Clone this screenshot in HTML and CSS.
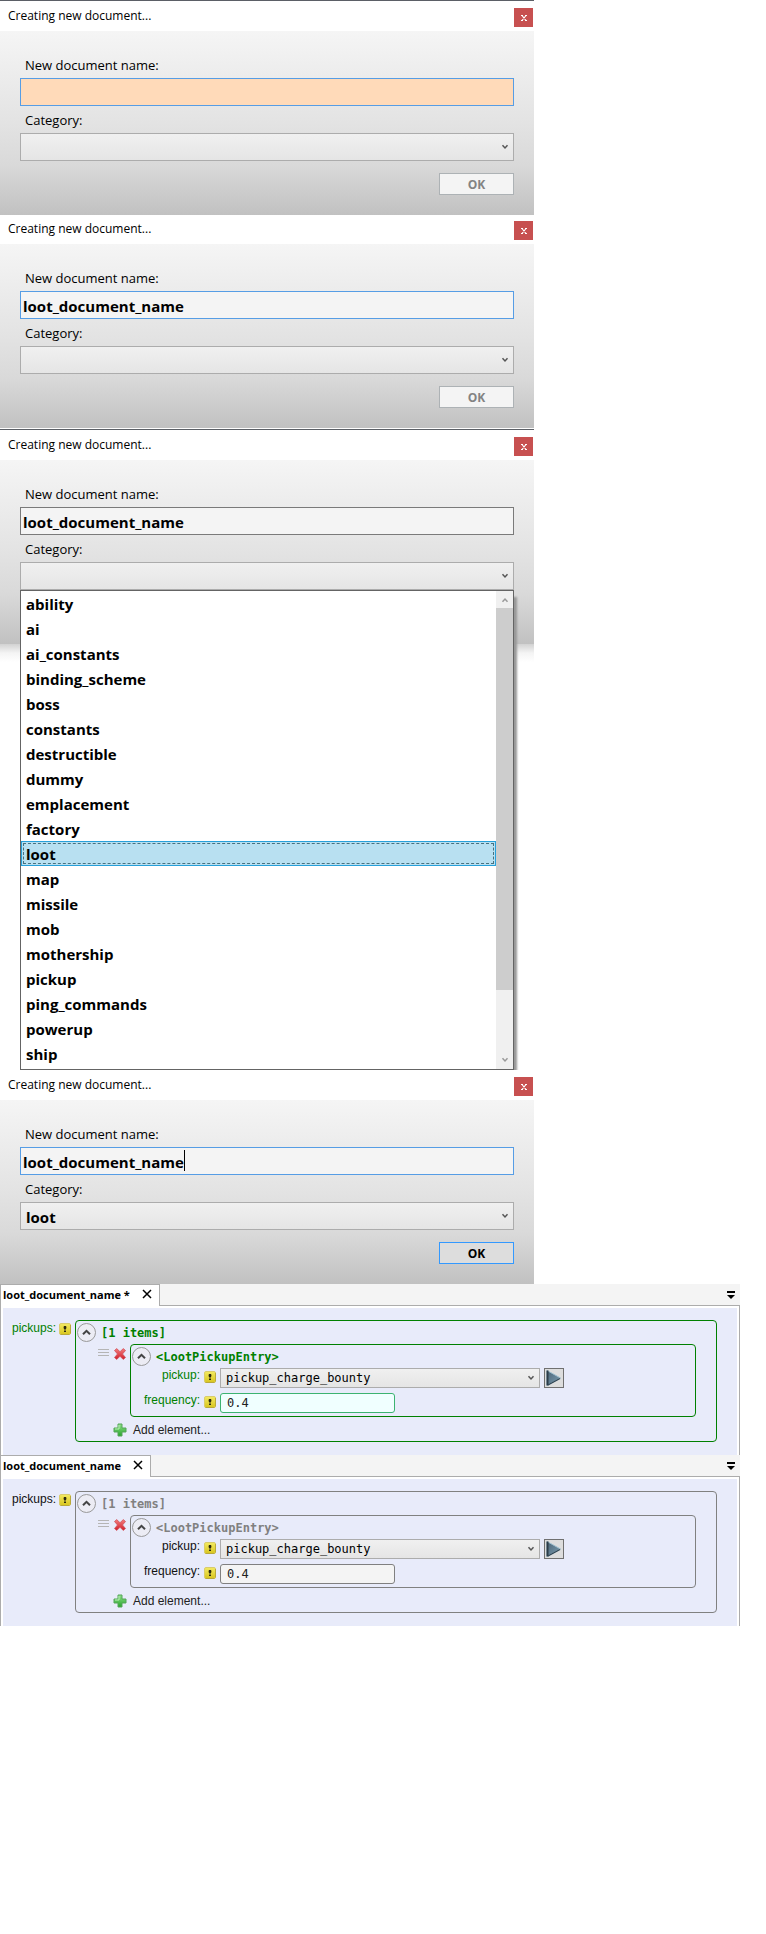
FILE: index.html
```
<!DOCTYPE html>
<html lang="en">
<head>
<meta charset="utf-8">
<title>Creating new document</title>
<link rel="stylesheet" href="styles.css">
</head>
<body>
<svg class="defs" width="0" height="0" aria-hidden="true">
  <defs>
    <linearGradient id="g-yellow" x1="0" y1="0" x2="0" y2="1"><stop offset="0" stop-color="#f3ea63"/><stop offset="1" stop-color="#d8c51e"/></linearGradient>
    <linearGradient id="g-red" x1="0" y1="0" x2="0" y2="1"><stop offset="0" stop-color="#f47d7d"/><stop offset="1" stop-color="#cf1f2b"/></linearGradient>
    <linearGradient id="g-green" x1="0" y1="0" x2="0" y2="1"><stop offset="0" stop-color="#8fe08a"/><stop offset="1" stop-color="#27a52b"/></linearGradient>
    <linearGradient id="g-play" x1="0" y1="0" x2="1" y2="1"><stop offset="0" stop-color="#4b6578"/><stop offset="1" stop-color="#7c9db0"/></linearGradient>
    <symbol id="chevron" viewBox="0 0 8 6"><path d="M1.500 1.300 L4 4 L6.500 1.300" fill="none" stroke="currentColor" stroke-width="1.5"/></symbol>
    <symbol id="note" viewBox="0 0 12 12"><rect x=".5" y=".5" width="11" height="11" rx="1.5" fill="url(#g-yellow)" stroke="#d9cc6c"/><path d="M1.500 11.500h9M11.500 2v8.500" stroke="#b9a93a" fill="none"/><path d="M5 3h2v3.500h-2zM5 7.500h2v1.500h-2z" fill="#2c2a10"/><path d="M4.300 3.500h.7v2h-.7zM7 3.500h.7v2h-.7z" fill="#8a7d1c"/></symbol>
    <symbol id="remove" viewBox="0 0 12 12"><path d="M.5 2.500 2.700.6 6 3.700 9.300.6l2.200 1.900L8.500 6l3 3.500-2.200 1.900L6 8.300l-3.300 3.100L.5 9.500 3.500 6z" fill="url(#g-red)" stroke="#d0505a" stroke-width=".8"/></symbol>
    <symbol id="plus" viewBox="0 0 14 14"><path d="M5 1h4v4h4v4H9v4H5V9H1V5h4z" fill="url(#g-green)" stroke="#55a558"/><path d="M6 2v4H2" fill="none" stroke="#b9efb5"/></symbol>
    <symbol id="drag" viewBox="0 0 12 8"><path d="M0 .5h11M0 3.500h11M0 6.500h11" stroke="#b5b5b5"/></symbol>
    <symbol id="collapse" viewBox="0 0 19 19"><circle cx="9.500" cy="9.500" r="9" fill="#ececf4" stroke="#999"/><path d="M6 11.300 9.500 7.800 13 11.300" fill="none" stroke="#444" stroke-width="2"/></symbol>
    <symbol id="play" viewBox="0 0 18 18"><path d="M2 1.500 15.500 9 2 16.500z" fill="url(#g-play)" stroke="#9fc0d0"/><path d="M2.500 1.500v15" stroke="#2c3d4a" stroke-width="2"/><path d="M3 16 15 9.500" stroke="#2f4452" stroke-width="1.300"/></symbol>
    <symbol id="tabclose" viewBox="0 0 10 10"><path d="M1 1l8 8M9 1l-8 8" stroke="#000" stroke-width="1.500"/></symbol>
    <symbol id="tablist" viewBox="0 0 8 8"><path d="M0 0h8v2H0zM0 4h8L4 8z" fill="#000"/></symbol>
    <symbol id="cross" viewBox="0 0 6 6"><path d="M0 .5h2M4 .5h2M0 5.500h2M4 5.500h2M1 .5l4 5M5 .5l-4 5" stroke="#fff" stroke-width="1.200"/></symbol>
  </defs>
</svg>

<main>
<section class="dialog dialog-edge">
  <header class="titlebar"><h2>Creating new document...</h2><button class="close" aria-label="Close"><svg width="6" height="6"><use href="#cross"/></svg></button></header>
  <form class="form">
    <label for="name1">New document name:</label>
    <input class="text active invalid" id="name1" type="text">
    <label for="cat1">Category:</label>
    <div class="select"><select id="cat1"><option></option><option>loot</option></select><svg width="8" height="6"><use href="#chevron"/></svg></div>
    <button class="ok" type="button" disabled>OK</button>
  </form>
</section>

<section class="dialog">
  <header class="titlebar titlebar-short"><h2>Creating new document...</h2><button class="close" aria-label="Close"><svg width="6" height="6"><use href="#cross"/></svg></button></header>
  <form class="form">
    <label for="name2">New document name:</label>
    <input class="text active" id="name2" type="text" value="loot_document_name">
    <label for="cat2">Category:</label>
    <div class="select"><select id="cat2"><option></option><option>loot</option></select><svg width="8" height="6"><use href="#chevron"/></svg></div>
    <button class="ok" type="button" disabled>OK</button>
  </form>
</section>

<section class="dialog dialog-edge dialog-open">
  <header class="titlebar"><h2>Creating new document...</h2><button class="close" aria-label="Close"><svg width="6" height="6"><use href="#cross"/></svg></button></header>
  <form class="form form-open">
    <label for="name3">New document name:</label>
    <input class="text" id="name3" type="text" value="loot_document_name">
    <label for="cat3">Category:</label>
    <div class="select"><select id="cat3"><option></option><option>loot</option></select><svg width="8" height="6"><use href="#chevron"/></svg></div>
    <div class="menu">
      <ul role="listbox" aria-label="Category">
        <li role="option">ability</li>
        <li role="option">ai</li>
        <li role="option">ai_constants</li>
        <li role="option">binding_scheme</li>
        <li role="option">boss</li>
        <li role="option">constants</li>
        <li role="option">destructible</li>
        <li role="option">dummy</li>
        <li role="option">emplacement</li>
        <li role="option">factory</li>
        <li role="option" class="selected" aria-selected="true">loot</li>
        <li role="option">map</li>
        <li role="option">missile</li>
        <li role="option">mob</li>
        <li role="option">mothership</li>
        <li role="option">pickup</li>
        <li role="option">ping_commands</li>
        <li role="option">powerup</li>
        <li role="option">ship</li>
      </ul>
      <div class="scrollbar">
        <svg class="up" width="8" height="6"><use href="#chevron"/></svg>
        <div class="track"><div class="thumb"></div></div>
        <svg width="8" height="6"><use href="#chevron"/></svg>
      </div>
    </div>
  </form>
</section>

<section class="dialog">
  <header class="titlebar"><h2>Creating new document...</h2><button class="close" aria-label="Close"><svg width="6" height="6"><use href="#cross"/></svg></button></header>
  <form class="form">
    <label for="name4">New document name:</label>
    <div class="caret-field"><input class="text active" id="name4" type="text" value="loot_document_name"><span class="caret"></span></div>
    <label for="cat4">Category:</label>
    <div class="select"><select id="cat4"><option>loot</option></select><svg width="8" height="6"><use href="#chevron"/></svg></div>
    <button class="ok ready" type="button">OK</button>
  </form>
</section>

<section class="editor modified">
  <header class="tabs">
    <div class="tab"><span>loot_document_name *</span><button aria-label="Close tab"><svg width="10" height="10"><use href="#tabclose"/></svg></button></div>
    <div class="tabs-rest"><button aria-label="Tab list"><svg width="8" height="8"><use href="#tablist"/></svg></button></div>
  </header>
  <div class="pane"><div class="canvas">
    <div class="key">pickups:</div><svg class="note" width="12" height="12"><use href="#note"/></svg>
    <div class="box">
      <div class="head"><button aria-label="Collapse"><svg width="19" height="19"><use href="#collapse"/></svg></button><span>[1 items]</span></div>
      <div class="item">
        <svg class="drag" width="12" height="8"><use href="#drag"/></svg>
        <button class="remove" aria-label="Remove"><svg width="12" height="12"><use href="#remove"/></svg></button>
        <div class="box">
          <div class="head"><button aria-label="Collapse"><svg width="19" height="19"><use href="#collapse"/></svg></button><span>&lt;LootPickupEntry&gt;</span></div>
          <div class="fields">
            <label for="pickup1">pickup:</label><svg class="mark" width="12" height="12"><use href="#note"/></svg>
            <div class="line"><div class="select small"><select id="pickup1"><option>pickup_charge_bounty</option></select><svg width="8" height="6"><use href="#chevron"/></svg></div><button class="play" type="button" aria-label="Go to document"><svg width="18" height="18"><use href="#play"/></svg></button></div>
            <label for="freq1">frequency:</label><svg class="mark" width="12" height="12"><use href="#note"/></svg>
            <input class="number" id="freq1" type="text" value="0.4">
          </div>
        </div>
      </div>
      <button class="add" type="button"><svg width="14" height="14"><use href="#plus"/></svg><span>Add element...</span></button>
    </div>
  </div></div>
</section>

<section class="editor">
  <header class="tabs">
    <div class="tab"><span>loot_document_name</span><button aria-label="Close tab"><svg width="10" height="10"><use href="#tabclose"/></svg></button></div>
    <div class="tabs-rest"><button aria-label="Tab list"><svg width="8" height="8"><use href="#tablist"/></svg></button></div>
  </header>
  <div class="pane"><div class="canvas">
    <div class="key">pickups:</div><svg class="note" width="12" height="12"><use href="#note"/></svg>
    <div class="box">
      <div class="head"><button aria-label="Collapse"><svg width="19" height="19"><use href="#collapse"/></svg></button><span>[1 items]</span></div>
      <div class="item">
        <svg class="drag" width="12" height="8"><use href="#drag"/></svg>
        <button class="remove" aria-label="Remove"><svg width="12" height="12"><use href="#remove"/></svg></button>
        <div class="box">
          <div class="head"><button aria-label="Collapse"><svg width="19" height="19"><use href="#collapse"/></svg></button><span>&lt;LootPickupEntry&gt;</span></div>
          <div class="fields">
            <label for="pickup2">pickup:</label><svg class="mark" width="12" height="12"><use href="#note"/></svg>
            <div class="line"><div class="select small"><select id="pickup2"><option>pickup_charge_bounty</option></select><svg width="8" height="6"><use href="#chevron"/></svg></div><button class="play" type="button" aria-label="Go to document"><svg width="18" height="18"><use href="#play"/></svg></button></div>
            <label for="freq2">frequency:</label><svg class="mark" width="12" height="12"><use href="#note"/></svg>
            <input class="number" id="freq2" type="text" value="0.4">
          </div>
        </div>
      </div>
      <button class="add" type="button"><svg width="14" height="14"><use href="#plus"/></svg><span>Add element...</span></button>
    </div>
  </div></div>
</section>
</main>
</body>
</html>
```
FILE: styles.css
```
* { box-sizing: border-box; }
body { margin: 0; background: #fff; color: #000; font-family: "Open Sans", "Noto Sans", sans-serif; }
.defs { position: absolute; }
svg { display: block; flex: none; }
button { padding: 0; border: 0; background: none; font: inherit; color: inherit; }
input, select { font: inherit; color: #000; border-radius: 0; outline: 0; margin: 0; }

/* dialogs */
.dialog { max-width: 534px; }
.dialog-edge { border-top: 1px solid #5b5f66; }
.dialog-open { margin-top: 1px; }
.titlebar { display: flex; justify-content: space-between; align-items: flex-end; height: 30px; padding: 0 1px 4px 8px; }
.titlebar-short { height: 29px; }
.titlebar h2 { margin: 0; font-size: 12px; line-height: 22px; font-weight: 400; }
.close { display: grid; place-items: center; width: 19px; height: 19px; background: #c75050; }
.form { display: flex; flex-direction: column; padding: 20px 20px 20px; background: linear-gradient(#f5f5f5 0%, #e3e3e3 50%, #d9d9d9 73%, #c1c1c1 100%); }
.form > label { padding: 2px 5px 0; font-size: 13px; line-height: 25px; }
.text { width: 100%; height: 28px; padding: 1px 2px 0; border: 1px solid #7a7a7a; background: #f4f4f4; font-size: 15px; font-weight: 700; }
.active { border-color: #569de5; }
.invalid { background: #ffdab9; }
.caret-field { position: relative; }
.caret { position: absolute; left: 164px; top: 3px; width: 1px; height: 21px; background: #000; }
.select { display: grid; align-items: center; color: #555; }
.select > * { grid-area: 1 / 1; }
.select svg { justify-self: end; margin-right: 5px; pointer-events: none; }
.select select { appearance: none; width: 100%; height: 28px; padding: 2px 20px 0 5px; border: 1px solid #acacac; background: linear-gradient(#f0f0f0, #e5e5e5); font-size: 15px; font-weight: 700; }
.ok { align-self: flex-end; width: 75px; height: 22px; margin-top: 12px; padding-top: 1px; border: 1px solid #adb2b5; background: #f4f4f4; color: #838383; font-size: 12px; font-weight: 700; line-height: 19px; }
.ready { border-color: #3399ff; background: #ddd; color: #000; }

.form-open { padding-bottom: 0; background: linear-gradient(#f5f5f5 0%, #e3e3e3 50%, #d9d9d9 73%, #c1c1c1 100%) 0 0 / 100% 184px no-repeat, linear-gradient(#d2d2d2, #f4f4f4 50%, #fff) 0 184px / 100% 18px no-repeat; }
.menu { display: flex; border: 1px solid #646464; background: #fff; box-shadow: 4px 6px 2px -1px #999; clip-path: inset(0 -8px 0 0); }
.menu ul { flex: 1; margin: 0; padding: 0 0 3px; list-style: none; font-size: 15px; font-weight: 700; }
.menu li { padding: 2px 4px 0; border: 1px solid transparent; line-height: 21px; }
.menu .selected { border-color: #26a0da; background: #b8e0f1; outline: 1px dashed #47717f; outline-offset: -3px; }
.scrollbar { display: flex; flex-direction: column; align-items: center; width: 17px; padding: 6px 0; background: #f0f0f0; color: #999; }
.up { transform: rotate(180deg); }
.track { flex: 1; align-self: stretch; margin: 5px 0; }
.thumb { height: 86%; background: #cdcdcd; }

/* document editor */
.editor { max-width: 740px; font-family: "Liberation Sans", Arial, sans-serif; font-size: 12px; --line: #808080; --key: #111; --field: #f4f4f4; }
.modified { --line: #008000; --key: #008000; --field: #f0ffff; }
.tabs { display: flex; height: 22px; background: #f4f4f4; }
.tab { display: flex; align-items: center; gap: 12px; padding: 0 7px 3px 2px; border: 1px solid #acacac; border-bottom: 0; background: #fff; font: 700 11px "Open Sans", "Noto Sans", sans-serif; }
.tabs-rest { flex: 1; display: flex; justify-content: flex-end; align-items: center; padding-right: 5px; border-bottom: 1px solid #acacac; }
.pane { padding: 2px 2px 0; border: solid #acacac; border-width: 0 1px; background: #fff; }
.canvas { display: grid; grid-template-columns: 43px 12px 1fr; column-gap: 4px; padding: 12px 20px 13px 9px; background: #e8ebfa; }
.key, .fields label { color: var(--key); line-height: 16px; }
.note { margin-top: 3px; }
.box { min-width: 0; border: 1px solid var(--line); border-radius: 4px; }
.head { display: flex; align-items: center; gap: 5px; height: 23px; padding: 0 1px; color: var(--line); font: 700 12px "DejaVu Sans Mono", monospace; }
.item { display: flex; gap: 4px; padding: 0 20px 0 22px; }
.item > .box { flex: 1; }
.drag { margin-top: 5px; }
.remove { align-self: flex-start; margin-top: 4px; }
.fields { display: grid; grid-template-columns: 69px 12px 1fr; gap: 5px 4px; padding-bottom: 3px; }
.fields label { line-height: 15px; text-align: right; }
.mark { margin-top: 3px; }
.line { display: flex; gap: 4px; }
.small { flex: 0 1 320px; min-width: 0; }
.small select { height: 20px; padding-top: 0; font: 12px "DejaVu Sans Mono", monospace; }
.play { display: grid; place-items: center; flex: none; width: 20px; height: 20px; border: 1px solid #707070; background: #ddd; }
.number { width: 100%; max-width: 175px; height: 20px; padding: 0 6px; border: 1px solid #808080; border-radius: 3px; background: var(--field); color: #222; font: 12px "DejaVu Sans Mono", monospace; }
.modified .number { border-color: #3cb371; }
.add { display: flex; align-items: center; gap: 6px; height: 24px; padding: 2px 0 0 37px; color: #222; }
```
